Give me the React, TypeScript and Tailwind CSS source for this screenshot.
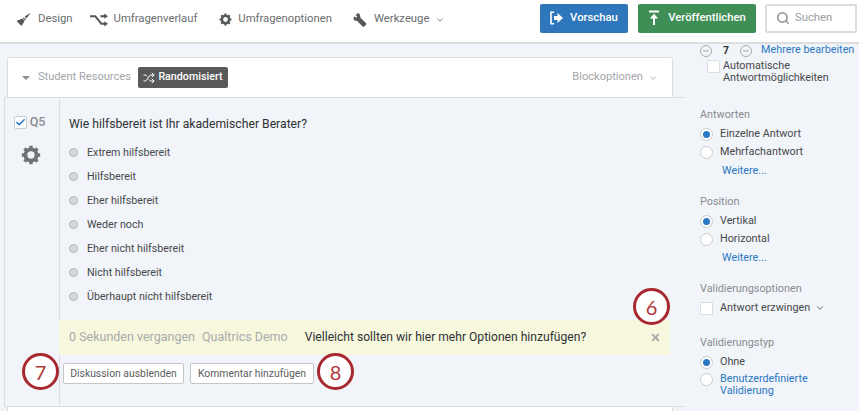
import React from "react";
import { Shuffle, ChevronDown, Search, Check, X, Minus } from "lucide-react";

function Radio({ on }: { on?: boolean }) {
  return (
    <span className="flex h-[13px] w-[13px] shrink-0 items-center justify-center rounded-full border border-[#c9cccf] bg-white">
      {on && <span className="h-[7px] w-[7px] rounded-full bg-[#2b78c5]" />}
    </span>
  );
}

function Choice({ label }: { label: string }) {
  return (
    <div className="flex h-6 items-center">
      <span className="h-[9px] w-[9px] -translate-y-px rounded-full border border-[#b4b6b8] bg-[#d5d7d9]" />
      <span className="ml-[9px] text-[10.7px] text-[#47494c]">{label}</span>
    </div>
  );
}

function Annot({ n, cls }: { n: string; cls: string }) {
  return (
    <span className={"absolute flex h-[37px] w-[37px] items-center justify-center rounded-full border-[3px] border-[#a82a30] bg-white text-[20px] text-[#b0383a] [font-family:Lato,sans-serif] " + cls}>
      {n}
    </span>
  );
}

function Gear({ size, cls }: { size: number; cls: string }) {
  return (
    <svg width={size} height={size} viewBox="0 0 24 24" className={cls} fill="none">
      <circle cx="12" cy="12" r="6.7" stroke="currentColor" strokeWidth="4.6" />
      <path d="M12 1v5M12 18v5M1 12h5M18 12h5M4.2 4.2l3.5 3.5M16.3 16.3l3.5 3.5M19.8 4.2l-3.5 3.5M7.7 16.3l-3.5 3.5" stroke="currentColor" strokeWidth="4" />
    </svg>
  );
}

function Brush() {
  return (
    <svg width="15" height="15" viewBox="0 0 16 16" fill="#55585b">
      <path d="M15.5.8 9.2 4.8l2.2 2.2z" />
      <path d="M8.3 5.6l2.4 2.3-1 1L7.3 6.6z" />
      <path d="M6.8 7l2.5 2.4-3.4 5.6-5.4-5.3z" />
    </svg>
  );
}

function Route() {
  return (
    <svg width="19" height="14" viewBox="0 0 20 14" fill="none" stroke="#55585b" strokeWidth="2.2">
      <path d="M0 3h5.5l6.5 8h4" />
      <path d="M11 3h5" />
      <path d="M15 0.2v5.6l4-2.8zM15 8.2v5.6l4-2.8z" fill="#55585b" stroke="none" />
    </svg>
  );
}

function Wrench() {
  return (
    <svg width="14" height="14" viewBox="0 0 14 14" fill="#55585b">
      <path d="M4.5.3 2.7 2.1l1.5 1.5-1.1 1.1-1.5-1.5L.4 4.9c-.1 1.8 1.5 3.3 3.5 2.800l5.700 5.700c.5.5 1.200.5 1.700.1l1.700-1.700c.4-.5.4-1.200-.1-1.700L7.200 4.400C7.800 2.400 6.300.3 4.500.3z" />
    </svg>
  );
}

export default function App() {
  return (
    <div className="flex h-[411px] w-[859px] flex-col overflow-hidden bg-[#f1f4f8] [font-family:Roboto,sans-serif]">
      <header className="flex h-[44px] shrink-0 items-center border-b-2 border-[#dcdddf] bg-white text-[#6a6d70]">
        <nav className="flex items-center pb-[3px] pl-[16px] text-[11.3px]">
          <Brush />
          <span className="ml-[7px]">Design</span>
          <span className="ml-[17px]"><Route /></span>
          <span className="ml-[5px]">Umfragenverlauf</span>
          <Gear size={13} cls="ml-[22px] text-[#55585b]" />
          <span className="ml-[6px]">Umfragenoptionen</span>
          <span className="ml-[21px]"><Wrench /></span>
          <span className="ml-[7px]">Werkzeuge</span>
          <ChevronDown size={10} className="ml-[6px]" />
        </nav>
        <div className="ml-auto flex items-center pb-[6px] pr-[2px]">
          <button className="flex h-[29px] w-[88px] items-center justify-center gap-[7px] rounded-[2px] bg-[#2f77bd] text-[11.3px] font-medium text-white">
            <svg width="13" height="14" viewBox="0 0 13 14" fill="none">
              <path d="M4 1.2H1v11.600h3" stroke="white" strokeWidth="1.6" />
              <path d="M4 5h3.500V2L13 7l-5.500 5V9H4z" fill="white" />
            </svg>
            Vorschau
          </button>
          <button className="ml-[10px] flex h-[29px] w-[118px] items-center justify-center gap-[8px] rounded-[2px] bg-[#3e8e55] text-[11.3px] font-medium text-white">
            <svg width="12" height="16" viewBox="0 0 12 16" fill="none" stroke="white" strokeWidth="2"><path d="M1 1.5h10M6 15V5" /><path d="M6 3.5l4 5H2z" fill="white" stroke="none" /></svg>
            Veröffentlichen
          </button>
          <div className="ml-[9px] flex h-[29px] w-[92px] items-center gap-[5px] rounded-[2px] border-2 border-[#dcdddf] pl-[9px] text-[11.3px] text-[#9b9da0]">
            <Search size={14} strokeWidth={3} />Suchen
          </div>
        </div>
      </header>

      <div className="flex min-h-0 flex-1">
        <main className="relative w-[685px] shrink-0 pt-[13px]">
          <div className="ml-[7px] flex h-[40px] w-[666px] items-center rounded-t-[3px] border border-b-0 border-[#dcdddf] bg-white pl-[14px] pr-[14px] text-[11.1px] text-[#a3a5a8]">
            <span className="h-0 w-0 border-x-[4px] border-t-[4px] border-x-transparent border-t-[#8c8e91]" />
            <span className="ml-[8px]">Student Resources</span>
            <span className="ml-[7px] flex h-[21px] w-[90px] items-center justify-center gap-[3px] rounded-[2px] bg-[#58595b] text-[10.7px] font-medium text-white">
              <Shuffle size={12} />Randomisiert
            </span>
            <span className="ml-auto">Blockoptionen</span>
            <ChevronDown size={10} className="ml-[5px]" />
          </div>
          <section className="relative ml-[4px] flex h-[310px] border-y border-l border-[#dcdddf]">
            <div className="flex w-[55px] shrink-0 flex-col items-center border-r border-[#dcdddf] pt-[15px]">
              <div className="-ml-[5px] flex items-center gap-[3px] text-[12.5px] font-medium text-[#8a8c8f]">
                <span className="flex h-[13px] w-[13px] items-center justify-center rounded-[2px] border border-[#c9cccf] bg-white">
                  <Check size={11} strokeWidth={3.5} className="text-[#2b78c5]" />
                </span>
                Q5
              </div>
              <Gear size={20} cls="mt-[13px] -translate-x-[1px] text-[#6f7174]" />
            </div>
            <div className="min-w-0 flex-1">
              <h2 className="ml-[9px] mt-[18px] text-[12.2px] font-normal leading-[17px] text-[#303235]">Wie hilfsbereit ist Ihr akademischer Berater?</h2>
              <div className="ml-[9px] mt-[8px]">
                {["Extrem hilfsbereit", "Hilfsbereit", "Eher hilfsbereit", "Weder noch", "Eher nicht hilfsbereit", "Nicht hilfsbereit", "Überhaupt nicht hilfsbereit"].map((c) => (
                  <Choice key={c} label={c} />
                ))}
              </div>
              <div className="-ml-[1px] mt-[11px] flex h-[35px] w-[611px] items-center bg-[#f6f7dc] pl-[10px] pr-[9px]">
                <span className="text-[12.5px] text-[#a9abab]">0 Sekunden vergangen</span>
                <span className="ml-[7px] text-[12.5px] text-[#a9abab]">Qualtrics Demo</span>
                <span className="ml-[17px] text-[12.1px] text-[#303235]">Vielleicht sollten wir hier mehr Optionen hinzufügen?</span>
                <X size={11} strokeWidth={4} className="ml-auto text-[#a9abab]" />
              </div>
              <div className="ml-[3px] mt-[8px] flex gap-[6px]">
                <button className="flex h-[21px] w-[121px] items-center justify-center rounded-[2px] border border-[#c4c6c8] bg-white text-[10.4px] text-[#5c5e61]">Diskussion ausblenden</button>
                <button className="flex h-[21px] w-[124px] items-center justify-center rounded-[2px] border border-[#c4c6c8] bg-white text-[10.4px] text-[#5c5e61]">Kommentar hinzufügen</button>
              </div>
            </div>
            <Annot n="6" cls="left-[628px] top-[190px]" />
            <Annot n="7" cls="left-[17px] top-[255px]" />
            <Annot n="8" cls="left-[312px] top-[255px]" />
          </section>
          <div className="ml-[7px] h-[10px] w-[666px] border-x border-[#dcdddf] bg-white" />
        </main>

        <aside className="min-w-0 flex-1 pl-[15px] text-[10.8px] text-[#47494c]">
          <div className="flex h-[13px] items-center whitespace-nowrap">
            <span className="flex h-[12px] w-[12px] items-center justify-center rounded-full border border-[#a9abae]"><Minus size={8} className="text-[#777]" /></span>
            <span className="ml-[11px] text-[10.5px] font-bold text-[#303235]">7</span>
            <span className="ml-[11px] flex h-[12px] w-[12px] items-center justify-center rounded-full border border-[#a9abae]"><Minus size={8} className="text-[#777]" /></span>
            <span className="ml-[9px] text-[#2b78c5]">Mehrere bearbeiten</span>
          </div>
          <div className="mt-[3px] flex pl-[7px]">
            <span className="h-[13px] w-[13px] shrink-0 rounded-[1px] border border-[#dcdddf] bg-white" />
            <span className="ml-[3px] leading-[12px]">Automatische Antwortmöglichkeiten</span>
          </div>
          <p className="mt-[24px] leading-[14px] text-[#8a8c8f]">Antworten</p>
          <div className="mt-[3px] flex h-[18px] items-center gap-[7px]"><Radio on />Einzelne Antwort</div>
          <div className="flex h-[18px] items-center gap-[7px]"><Radio />Mehrfachantwort</div>
          <p className="ml-[22px] mt-[3px] leading-[14px] text-[#2b78c5]">Weitere...</p>
          <p className="mt-[17px] leading-[14px] text-[#8a8c8f]">Position</p>
          <div className="mt-[3px] flex h-[18px] items-center gap-[7px]"><Radio on />Vertikal</div>
          <div className="flex h-[18px] items-center gap-[7px]"><Radio />Horizontal</div>
          <p className="ml-[22px] mt-[3px] leading-[14px] text-[#2b78c5]">Weitere...</p>
          <p className="mt-[17px] leading-[14px] text-[#8a8c8f]">Validierungsoptionen</p>
          <div className="mt-[5px] flex h-[14px] items-center"><span className="h-[13px] w-[13px] rounded-[1px] border border-[#dcdddf] bg-white" /><span className="ml-[7px]">Antwort erzwingen</span><ChevronDown size={10} className="ml-[5px]" /></div>
          <p className="mt-[21px] leading-[14px] text-[#8a8c8f]">Validierungstyp</p>
          <div className="mt-[3px] flex h-[18px] items-center gap-[7px]"><Radio on />Ohne</div>
          <div className="flex gap-[7px]"><span className="pt-[2px]"><Radio /></span><span className="pt-[2px] leading-[12px] text-[#2b78c5]">Benutzerdefinierte Validierung</span></div>
        </aside>
      </div>
    </div>
  );
}
